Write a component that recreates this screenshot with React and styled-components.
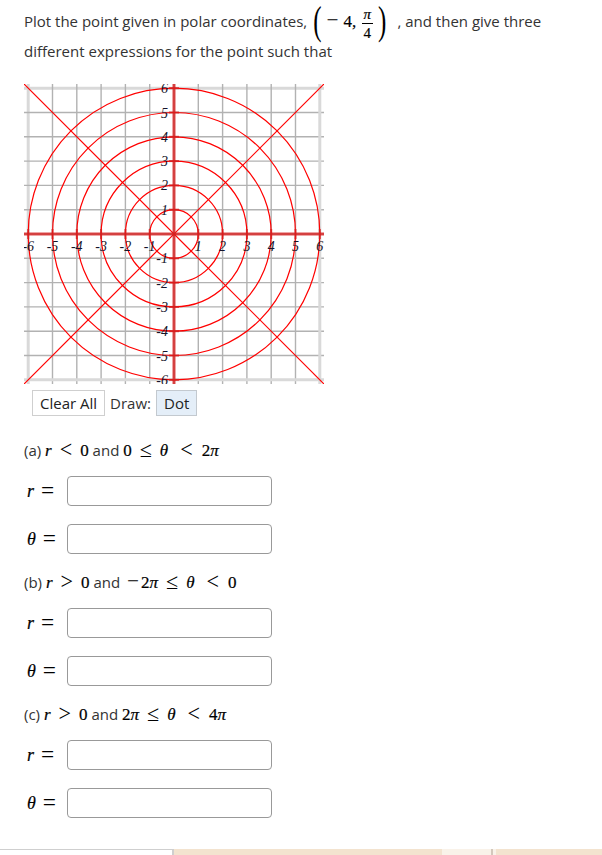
import styled, { createGlobalStyle } from "styled-components";

const GlobalStyle = createGlobalStyle`
  html, body {
    margin: 0;
    padding: 0;
    background: #fff;
  }
  body {
    font-family: "Open Sans", "Noto Sans", sans-serif;
    font-size: 15px;
    color: #333;
  }
`;

const UNIT = 24.3;
const C = 150;
const STEPS = [-6, -5, -4, -3, -2, -1, 0, 1, 2, 3, 4, 5, 6];

function PolarGraph() {
  return (
    <GraphBox>
      <svg width="300" height="300" viewBox="0 0 300 300">
        {STEPS.map((k) => {
          const p = C + k * UNIT;
          const edge = Math.abs(k) === 6;
          const stroke = edge ? "#d9d9d9" : "#b2b2b2";
          const w = edge ? 3 : 1.4;
          return (
            <g key={"g" + k}>
              <line x1={p} y1="0" x2={p} y2="300" stroke={stroke} strokeWidth={w} />
              <line x1="0" y1={p} x2="300" y2={p} stroke={stroke} strokeWidth={w} />
            </g>
          );
        })}

        {[1, 2, 3, 4, 5, 6].map((r) => (
          <circle key={"c" + r} cx={C} cy={C} r={r * UNIT} fill="none" stroke="#f00" strokeWidth="1.2" />
        ))}
        <line x1="0" y1="0" x2="300" y2="300" stroke="#f00" strokeWidth="1.2" />
        <line x1="300" y1="0" x2="0" y2="300" stroke="#f00" strokeWidth="1.2" />

        {/* axes with short ticks */}
        <line x1="0" y1={C} x2="300" y2={C} stroke="rgba(215,30,30,0.8)" strokeWidth="3" />
        <line x1={C} y1="0" x2={C} y2="300" stroke="rgba(215,30,30,0.8)" strokeWidth="3" />
        {STEPS.filter((k) => k !== 0).map((k) => {
          const p = C + k * UNIT;
          return (
            <g key={"t" + k} stroke="rgba(215,30,30,0.8)" strokeWidth="2">
              <line x1={C - 5} y1={p} x2={C + 5} y2={p} />
              <line x1={p} y1={C - 5} x2={p} y2={C + 5} />
            </g>
          );
        })}

        <g fontFamily="'Liberation Serif', serif" fontStyle="italic" fontSize="14" fill="#14142a">
          {STEPS.filter((k) => k !== 0).map((k) => (
            <text key={"x" + k} x={C + k * UNIT} y={C + 17} textAnchor="middle">
              {k}
            </text>
          ))}
          {STEPS.filter((k) => k !== 0).map((k) => (
            <text key={"y" + k} x={C - 6} y={C - k * UNIT + 5} textAnchor="end">
              {k}
            </text>
          ))}
        </g>
      </svg>
    </GraphBox>
  );
}

function AnswerRow({ symbol }) {
  return (
    <Row>
      <VarLabel>
        <i>{symbol}</i>
        <Rel $tight>=</Rel>
      </VarLabel>
      <AnswerInput type="text" />
    </Row>
  );
}

export default function App() {
  return (
    <>
      <GlobalStyle />
      <Page>
        <Question>
          Plot the point given in polar coordinates,{" "}
          <M>
            <BigParen>(</BigParen>
            <Minus $gap={5}>−</Minus>
            <span>4,&thinsp;</span>
            <Frac>
              <Num>π</Num>
              <Den>4</Den>
            </Frac>
            <BigParen>)</BigParen>
          </M>
          <Comma>,</Comma> and then give three different expressions for the point such that
        </Question>

        <PolarGraph />

        <Controls>
          <ToolButton>Clear All</ToolButton>
          <span>Draw:</span>
          <ToolButton $active>Dot</ToolButton>
        </Controls>

        <Part $first>
          <PartTitle>
            (a){" "}
            <M>
              <i>r</i>
              <Rel>&lt;</Rel>0
            </M>{" "}
            and{" "}
            <M>
              0<Rel>≤</Rel>
              <i>θ</i>
              <Rel $wide>&lt;</Rel>2<i>π</i>
            </M>
          </PartTitle>
          <AnswerRow symbol="r" />
          <AnswerRow symbol="θ" />
        </Part>

        <Part>
          <PartTitle>
            (b){" "}
            <M>
              <i>r</i>
              <Rel>&gt;</Rel>0
            </M>{" "}
            and{" "}
            <M>
              <Minus $gap={2}>−</Minus>2<i>π</i>
              <Rel>≤</Rel>
              <i>θ</i>
              <Rel $wide>&lt;</Rel>0
            </M>
          </PartTitle>
          <AnswerRow symbol="r" />
          <AnswerRow symbol="θ" />
        </Part>

        <Part>
          <PartTitle>
            (c){" "}
            <M>
              <i>r</i>
              <Rel>&gt;</Rel>0
            </M>{" "}
            and{" "}
            <M>
              2<i>π</i>
              <Rel>≤</Rel>
              <i>θ</i>
              <Rel $wide>&lt;</Rel>4<i>π</i>
            </M>
          </PartTitle>
          <AnswerRow symbol="r" />
          <AnswerRow symbol="θ" />
        </Part>
      </Page>

      <Footer>
        <FooterSeg $w={174} $bg="#fff" $line />
        <FooterSeg $w={268} $bg="#f3e3cf" />
        <FooterSeg $w={49} $bg="#f9f2e9" />
        <FooterSeg $w={2} $bg="#d3c8bc" />
        <FooterSeg $w={3} $bg="#f9f2e9" />
        <FooterSeg $w={106} $bg="#f3e3cf" />
      </Footer>
    </>
  );
}

const Page = styled.div`
  padding-left: 24px;
  width: 560px;
`;

const Question = styled.p`
  margin: 6px 0 0;
  line-height: 30px;
  width: 530px;
`;

const M = styled.span`
  font-family: "Liberation Serif", "DejaVu Serif", serif;
  font-size: 17px;
  line-height: 1;
  color: #000;
  white-space: nowrap;
  -webkit-text-stroke: 0.2px #000;

  i {
    font-style: italic;
  }
`;

const Comma = styled.span`
  margin-left: 9px;
`;

const Minus = styled.span`
  display: inline-block;
  font-size: 1.25em;
  line-height: 1;
  -webkit-text-stroke: 0;
  margin: 0 ${(p) => p.$gap}px 0 3px;
`;

const BigParen = styled.span`
  display: inline-block;
  font-size: 25px;
  line-height: 1;
  -webkit-text-stroke: 0;
  transform: scaleY(1.6);
  vertical-align: -2px;
  margin: 0 2px;
`;

const Frac = styled.span`
  display: inline-flex;
  flex-direction: column;
  align-items: center;
  vertical-align: middle;
  font-size: 15px;
  line-height: 14px;
  margin: -7px 3px -7px 2px;
`;

const Num = styled.span`
  font-style: italic;
  padding: 0 2px 2px;
  border-bottom: 1px solid #000;
`;

const Den = styled.span`
  padding-top: 2px;
`;

const Rel = styled.span`
  display: inline-block;
  font-size: 1.3em;
  line-height: 1;
  vertical-align: -1px;
  -webkit-text-stroke: 0;
  margin: ${(p) => (p.$tight ? "0 0 0 7px" : p.$wide ? "0 9px 0 12px" : "0 8px")};
`;

const GraphBox = styled.div`
  width: 300px;
  height: 300px;
  margin-top: 18px;

  svg {
    display: block;
  }
`;

const Controls = styled.div`
  display: flex;
  align-items: center;
  gap: 5px;
  height: 26px;
  margin: 6px 0 0 8px;
`;

const ToolButton = styled.button`
  height: 26px;
  padding: 0 7px;
  font-family: inherit;
  font-size: 15px;
  color: #222;
  background: ${(p) => (p.$active ? "#e4eef8" : "#fff")};
  border: 1px solid ${(p) => (p.$active ? "#c3c9cf" : "#cfcfcf")};
  border-radius: 0;
`;

const Part = styled.section`
  margin-top: ${(p) => (p.$first ? "22px" : "16px")};
`;

const PartTitle = styled.div`
  height: 24px;
  line-height: 24px;
`;

const Row = styled.div`
  display: flex;
  align-items: center;
  height: 30px;
  margin-top: 14px;

  & + & {
    margin-top: 18px;
  }
`;

const VarLabel = styled.span`
  box-sizing: border-box;
  width: 43px;
  padding-left: 3px;
  font-family: "Liberation Serif", "DejaVu Serif", serif;
  font-size: 18px;
  color: #000;
  -webkit-text-stroke: 0.2px #000;
`;

const AnswerInput = styled.input`
  box-sizing: border-box;
  width: 205px;
  height: 30px;
  border: 1px solid #999;
  border-radius: 4px;
  background: #fff;
`;

const Footer = styled.div`
  display: flex;
  height: 10px;
  margin-top: 31px;
`;

const FooterSeg = styled.div`
  flex: 0 0 ${(p) => p.$w}px;
  background: ${(p) => p.$bg};
  border-top: ${(p) => (p.$line ? "1px solid #cfcfcf" : "none")};
  border-right: ${(p) => (p.$line ? "2px solid #cfcfcf" : "none")};
  box-sizing: border-box;
`;
